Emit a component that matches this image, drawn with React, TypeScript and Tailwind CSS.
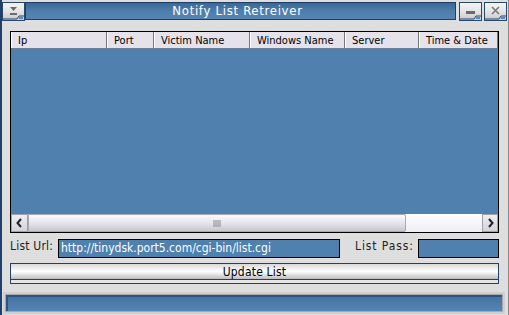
import React from "react";

const font = { fontFamily: '"DejaVu Sans", Verdana, sans-serif' };
const cond = { fontFamily: '"DejaVu Sans Condensed", "DejaVu Sans", sans-serif', fontStretch: "condensed" as const };

function TitleBtn({ kind }: { kind: "sys" | "min" | "close" }) {
  return (
    <div className="relative h-[19px] w-[23px] border border-[#27496f] bg-gradient-to-b from-[#f4f4f4] via-[#e4e4e4] to-[#c9c9c9]">
      <svg width="21" height="17" className="absolute left-0 top-0">
        {kind === "sys" && (
          <>
            <path d="M7 4 L14 4 L10.5 8 Z" fill="#6b6b6b" />
            <rect x="7" y="10" width="7" height="2" fill="#6b6b6b" />
          </>
        )}
        {kind === "min" && <rect x="6" y="8" width="9" height="3" fill="#6a6a6a" />}
        {kind === "close" && (
          <path d="M7 4 L14 11 M14 4 L7 11" stroke="#7a7a7a" strokeWidth="1.6" />
        )}
        <path d="M0 16 L14 16 L16 13 L21 13" stroke="#27496f" strokeWidth="1" fill="none" />
        <rect x="16" y="14" width="4" height="2" fill="#5b8cc0" />
      </svg>
    </div>
  );
}

export default function App() {
  const cols = [
    { name: "Ip", w: 96 },
    { name: "Port", w: 47 },
    { name: "Victim Name", w: 96 },
    { name: "Windows Name", w: 95 },
    { name: "Server", w: 74 },
    { name: "Time & Date", w: 79 },
  ];
  return (
    <div
      className="flex h-[315px] w-[509px] flex-col overflow-hidden border-l-2 border-l-[#1f406a] border-r border-r-[#8a8a8a] bg-[#dedede]"
      style={font}
    >
      {/* title bar */}
      <div className="flex h-[22px] items-start pt-[2px]">
        <div className="ml-0">
          <TitleBtn kind="sys" />
        </div>
        <div
          className="flex h-[18px] w-[431px] items-center justify-center border border-[#1f3f66] bg-gradient-to-b from-[#3b6896] via-[#4f7eac] to-[#5585b3] pr-[6px] text-[13px] tracking-[0.7px] text-white"
          style={cond}
        >
          Notify List Retreiver
        </div>
        <div className="ml-[3px]">
          <TitleBtn kind="min" />
        </div>
        <div className="ml-[2px]">
          <TitleBtn kind="close" />
        </div>
      </div>

      {/* list view */}
      <div className="ml-[8px] mt-[9px] flex h-[202px] w-[489px] flex-col border border-black bg-[#4f80ae]">
        <div className="flex h-[16px] bg-[#e6e2ea] text-[11px] text-black" style={cond}>
          {cols.map((c) => (
            <div
              key={c.name}
              className="flex items-center border-r border-r-[#777] border-l border-l-white pl-[6px] leading-none"
              style={{ width: c.w }}
            >
              {c.name}
            </div>
          ))}
        </div>
        <div className="h-px bg-[#6d7f92]" />
        <div className="flex-1" />
        {/* horizontal scrollbar */}
        <div className="flex h-[18px] bg-[#f3f1f6]">
          <div className="flex h-[18px] w-[17px] items-center justify-center border border-[#a0a0a8] bg-gradient-to-b from-[#f0eef4] to-[#d4d2da]">
            <svg width="9" height="10">
              <path d="M6 1 L2.5 5 L6 9" stroke="#222" strokeWidth="2" fill="none" />
            </svg>
          </div>
          <div className="flex h-[18px] w-[378px] items-center justify-center rounded-r-[2px] border border-[#a9a9b4] bg-gradient-to-b from-[#fbfbfd] via-[#e6e4ec] to-[#c8c6d0]">
            <svg width="8" height="7">
              <path d="M1 0 V7 M3 0 V7 M5 0 V7 M7 0 V7" stroke="#8a8a8a" strokeWidth="1" />
            </svg>
          </div>
          <div className="flex-1 bg-gradient-to-b from-[#fefefe] to-[#efedf3]" />
          <div className="flex h-[18px] w-[16px] items-center justify-center border border-[#a0a0a8] bg-gradient-to-b from-[#f0eef4] to-[#d4d2da]">
            <svg width="9" height="10">
              <path d="M3 1 L6.5 5 L3 9" stroke="#222" strokeWidth="2" fill="none" />
            </svg>
          </div>
        </div>
      </div>

      {/* url row */}
      <div className="mt-[5px] flex h-[20px] items-center text-[12px] text-[#222]" style={cond}>
        <div className="ml-[8px] w-[48px] pb-[4px] tracking-[0.2px]">List Url:</div>
        <div className="flex h-[19px] w-[282px] items-center border border-black bg-[#4f80ae] pl-[2px] text-[12px] text-white">
          http://tinydsk.port5.com/cgi-bin/list.cgi
        </div>
        <div className="ml-[15px] w-[63px] pb-[4px] tracking-[0.9px]">List Pass:</div>
        <div className="h-[19px] w-[81px] border border-black bg-[#4f80ae]" />
      </div>

      {/* update button */}
      <div className="ml-[8px] mt-[5px] flex h-[21px] w-[489px] flex-col border border-[#1f4266] bg-[#dcdcdc]">
        <div
          className="flex h-[16px] items-center justify-center border-b border-b-[#1f4266] bg-gradient-to-b from-[#d8d8d8] via-[#ffffff] to-[#bdbdbd] text-[12px] tracking-[0.2px] text-black"
          style={cond}
        >
          Update List
        </div>
        <div className="flex-1 bg-[#e6e6e6]" />
      </div>

      {/* status bar */}
      <div className="ml-[1px] mt-[8px] h-[22px] w-[502px] border-2 border-[#cfcfcf] bg-[#a9a9a9] p-[1px]">
        <div className="h-full w-full border-t-2 border-l-2 border-t-[#2d5480] border-l-[#2d5480] bg-gradient-to-b from-[#4673a1] to-[#5585b4]" />
      </div>
      <div className="flex-1" />
    </div>
  );
}
